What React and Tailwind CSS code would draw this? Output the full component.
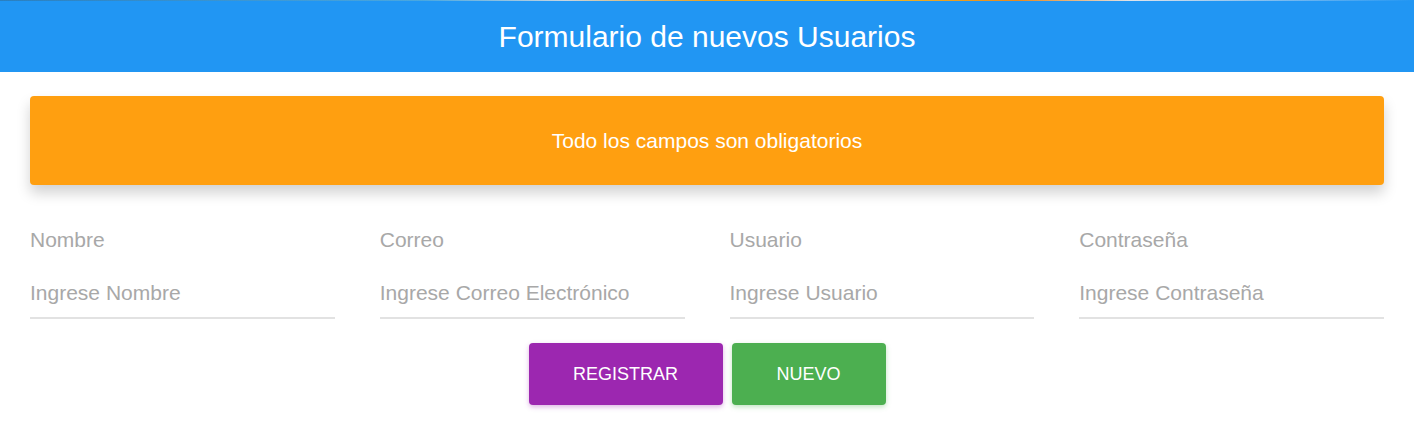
import { useState } from "react";

const campos = [
  { label: "Nombre", ph: "Ingrese Nombre", type: "text" },
  { label: "Correo", ph: "Ingrese Correo Electrónico", type: "email" },
  { label: "Usuario", ph: "Ingrese Usuario", type: "text" },
  { label: "Contraseña", ph: "Ingrese Contraseña", type: "password" },
];

export default function App() {
  const [vals, setVals] = useState({});

  return (
    <div className="min-h-[428px] bg-white font-['Liberation_Sans',Arial,sans-serif]">
      <div className="h-px bg-[linear-gradient(90deg,#2a7fbf_0%,#4aa8e0_30%,#c9d6e0_40%,#e8a020_50%,#f0c020_60%,#e88a20_72%,#e0e4ea_80%,#2196f3_100%)]" />
      <header className="flex h-[71px] items-center justify-center bg-[#2196f3]">
        <h1 className="text-[30px] text-white">Formulario de nuevos Usuarios</h1>
      </header>

      <div className="px-[30px] pt-[24px]">
        <div className="flex h-[89px] items-center justify-center rounded bg-[#ff9f10] text-[21px] text-white shadow-[0_8px_14px_rgba(0,0,0,0.18)]">
          Todo los campos son obligatorios
        </div>

        <div className="mt-[41px] grid grid-cols-4 gap-[45px]">
          {campos.map((c) => (
            <label key={c.label} className="block">
              <span className="block text-[21px] leading-[28px] text-[#a8a8a8]">{c.label}</span>
              <input
                type={c.type}
                placeholder={c.ph}
                value={vals[c.label] || ""}
                onChange={(e) => setVals({ ...vals, [c.label]: e.target.value })}
                className="mt-[15px] block h-[50px] w-full border-b-2 border-[#e2e2e2] bg-transparent text-[21px] text-[#555] outline-none placeholder:text-[#a8a8a8]"
              />
            </label>
          ))}
        </div>

        <div className="mt-[24px] flex justify-center gap-[9px]">
          <button className="h-[62px] w-[194px] rounded bg-[#9c27b0] text-[18px] text-white shadow-[0_2px_5px_rgba(156,39,176,0.35)]">
            REGISTRAR
          </button>
          <button className="h-[62px] w-[154px] rounded bg-[#4caf50] text-[18px] text-white shadow-[0_2px_5px_rgba(76,175,80,0.35)]">
            NUEVO
          </button>
        </div>
      </div>
    </div>
  );
}
